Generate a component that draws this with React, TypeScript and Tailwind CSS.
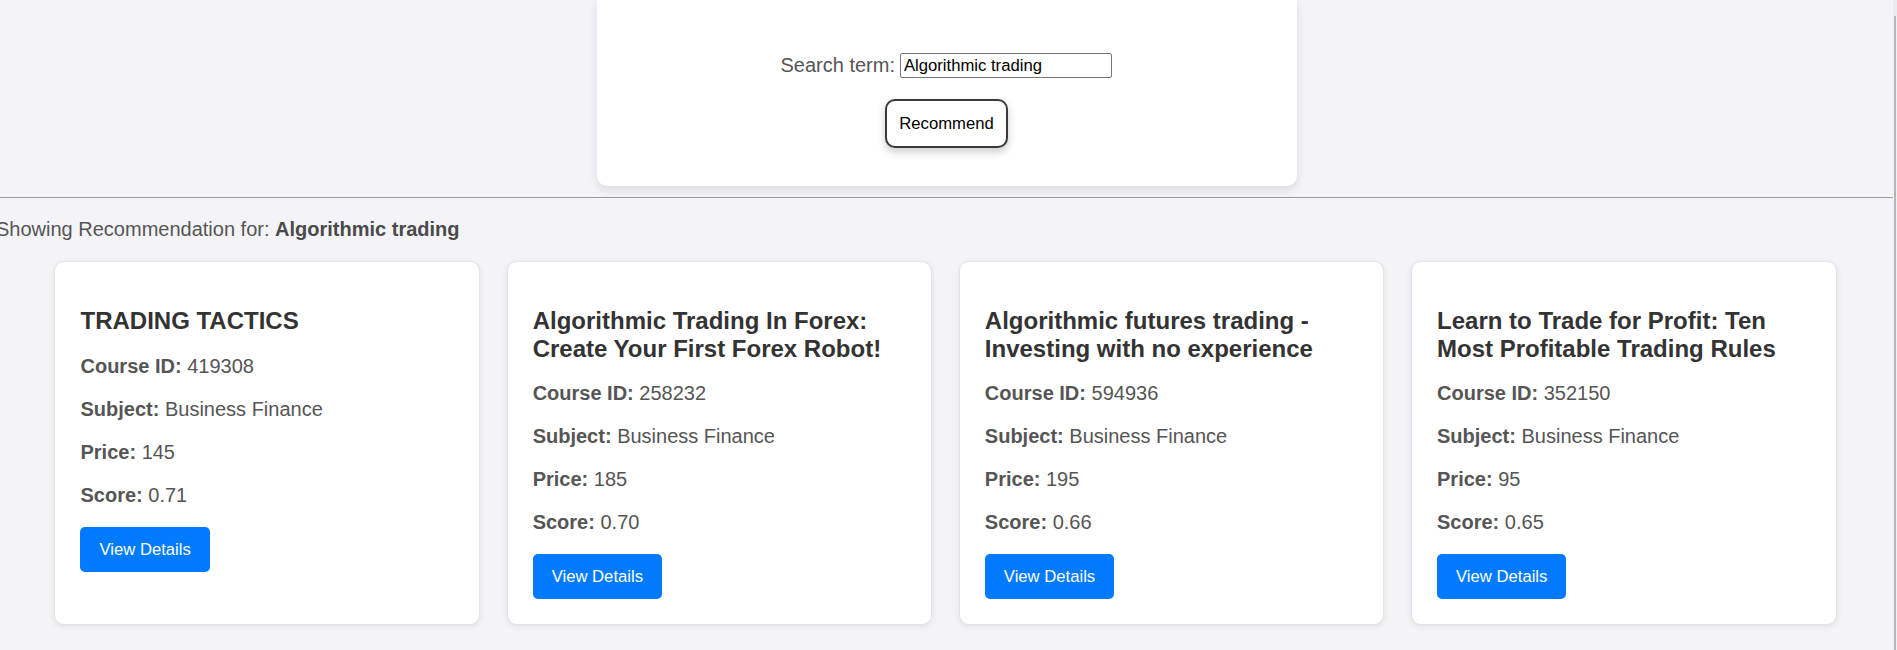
const courses = [
  { title: "TRADING TACTICS", id: 419308, subject: "Business Finance", price: 145, score: "0.71" },
  {
    title: "Algorithmic Trading In Forex: Create Your First Forex Robot!",
    id: 258232,
    subject: "Business Finance",
    price: 185,
    score: "0.70",
  },
  {
    title: "Algorithmic futures trading - Investing with no experience",
    id: 594936,
    subject: "Business Finance",
    price: 195,
    score: "0.66",
  },
  {
    title: "Learn to Trade for Profit: Ten Most Profitable Trading Rules",
    id: 352150,
    subject: "Business Finance",
    price: 95,
    score: "0.65",
  },
];

function CourseCard({ course }: { course: (typeof courses)[number] }) {
  return (
    <article className="flex w-[425.5px] flex-col rounded-[10px] border border-[#e3e3e6] bg-white px-[25px] pt-[25px] pb-[25px] shadow-[0_2px_6px_rgba(0,0,0,0.08)]">
      <h3 className="mt-[20px] text-[24px] leading-[27.6px] font-bold text-[#333]">{course.title}</h3>
      <p className="mt-[20px] text-[20px] leading-[23px] text-[#555]">
        <strong>Course ID:</strong> {course.id}
      </p>
      <p className="mt-[20px] text-[20px] leading-[23px] text-[#555]">
        <strong>Subject:</strong> {course.subject}
      </p>
      <p className="mt-[20px] text-[20px] leading-[23px] text-[#555]">
        <strong>Price:</strong> {course.price}
      </p>
      <p className="mt-[20px] text-[20px] leading-[23px] text-[#555]">
        <strong>Score:</strong> {course.score}
      </p>
      <div className="mt-[20px]">
        <button className="h-[45px] rounded-[5px] bg-[#007bff] px-[19px] text-[16.67px] text-white">
          View Details
        </button>
      </div>
    </article>
  );
}

export default function App() {
  return (
    <div className="flex min-h-screen bg-[#f4f4f8] font-['Liberation_Sans',Arial,sans-serif]">
      <main className="min-w-0 flex-1">
        <div className="flex justify-center">
          <form className="flex w-[700px] flex-col items-center rounded-b-[10px] bg-white pt-[53px] pb-[38px] shadow-[0_4px_10px_rgba(0,0,0,0.1)]">
            <div className="flex h-[25px] items-center gap-[5.5px]">
              <label className="text-[20px] leading-[23px] text-[#555]">Search term:</label>
              <input
                defaultValue="Algorithmic trading"
                className="h-[25px] w-[212px] rounded-[2px] border border-[#767676] px-[2.5px] text-[16.67px] text-black"
              />
            </div>
            <button
              type="button"
              className="mt-[21px] rounded-[10px] border-2 border-[#3a3a3a] bg-white px-[12.5px] py-[13px] text-[16.67px] leading-[19px] text-black shadow-[0_4px_8px_rgba(0,0,0,0.2)]"
            >
              Recommend
            </button>
          </form>
        </div>

        <hr className="mt-[11px] border-t border-[#9c9c9c]" />

        <p className="mt-[20px] -ml-[4px] text-[20px] leading-[23px] text-[#555]">
          Showing Recommendation for: <strong className="text-[#4a4a4a]">Algorithmic trading</strong>
        </p>

        <div className="mt-[20px] flex justify-center gap-[26.7px] pr-[2px]">
          {courses.map((c) => (
            <CourseCard key={c.id} course={c} />
          ))}
        </div>
      </main>
      <div className="flex w-[4px] flex-col">
        <div className="h-[16px] bg-[#ececec]" />
        <div className="flex flex-1 bg-[#f1f1f1] pl-[1px]">
          <div className="w-[2px] bg-[#b5b5b5]" />
        </div>
      </div>
    </div>
  );
}
